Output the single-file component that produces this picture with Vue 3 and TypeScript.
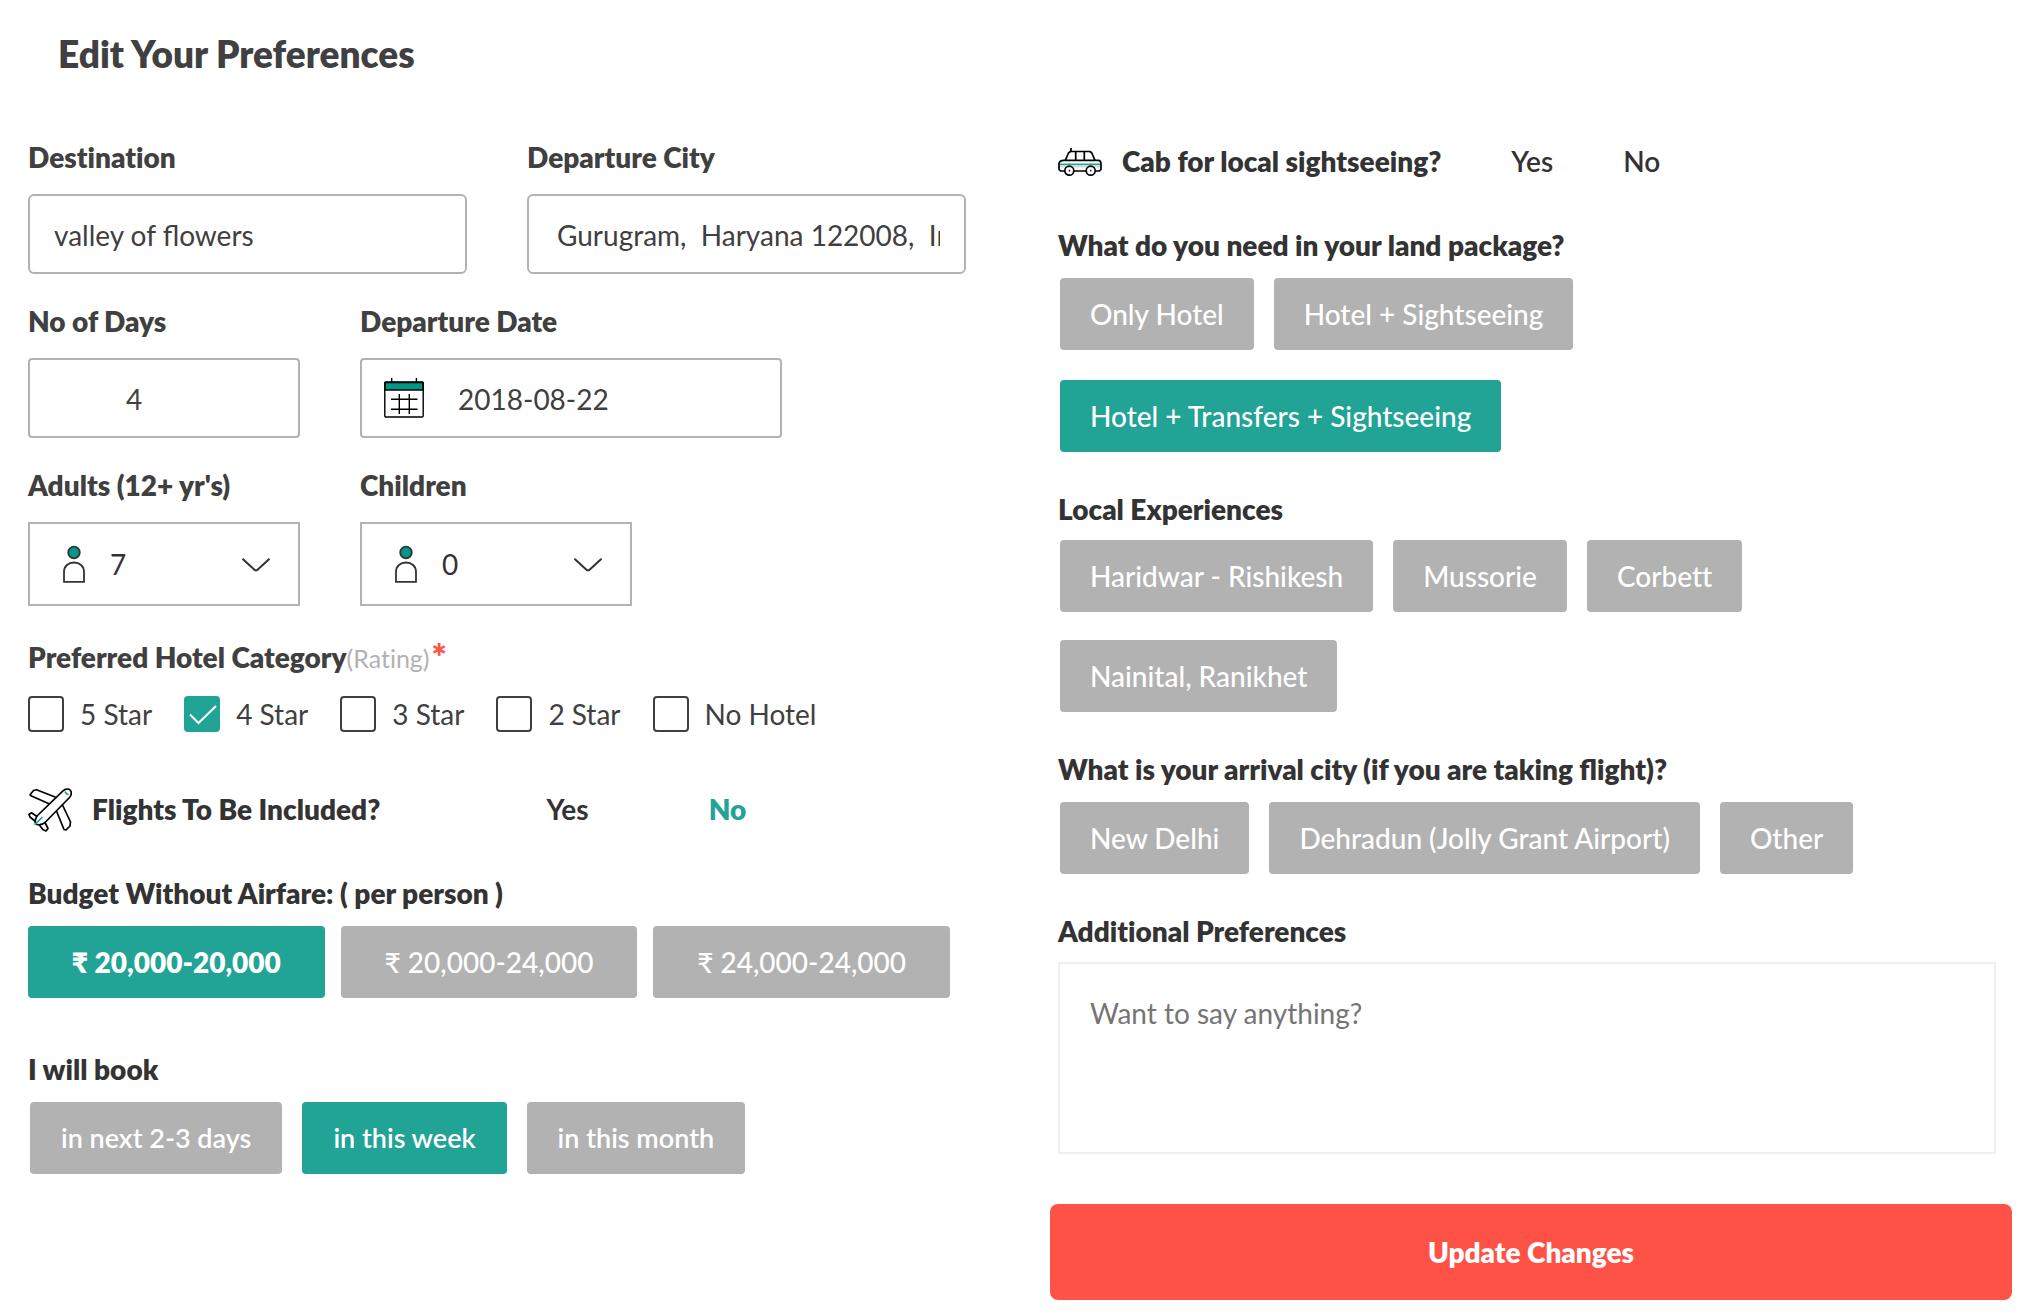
<script setup lang="ts">
import { ref } from 'vue'

const destination = ref('valley of flowers')
const departureCity = ref('Gurugram,  Haryana 122008,  India')
const days = ref('4')
const departureDate = ref('2018-08-22')
const adults = ref(7)
const children = ref(0)
const notes = ref('')

const ratings = ['5 Star', '4 Star', '3 Star', '2 Star', 'No Hotel']
const selectedRatings = ref<string[]>(['4 Star'])

const flights = ref('No')
const cab = ref('')

const budgets = ['₹ 20,000-20,000', '₹ 20,000-24,000', '₹ 24,000-24,000']
const budget = ref(budgets[0])

const bookingTimes = ['in next 2-3 days', 'in this week', 'in this month']
const bookingTime = ref('in this week')

const packages = ['Only Hotel', 'Hotel + Sightseeing', 'Hotel + Transfers + Sightseeing']
const landPackage = ref('Hotel + Transfers + Sightseeing')

const experiences = ['Haridwar - Rishikesh', 'Mussorie', 'Corbett', 'Nainital, Ranikhet']
const experience = ref('')

const cities = ['New Delhi', 'Dehradun (Jolly Grant Airport)', 'Other']
const arrivalCity = ref('')
</script>

<template>
  <main class="page">
    <h1 class="title">Edit Your Preferences</h1>
    <form class="columns" @submit.prevent>
      <div class="column">
        <div class="row halves">
          <div class="field">
            <label class="label" for="destination">Destination</label>
            <input id="destination" v-model="destination" class="box rounded" type="text" />
          </div>
          <div class="field">
            <label class="label" for="city">Departure City</label>
            <input id="city" v-model="departureCity" class="box rounded city" type="text" />
          </div>
        </div>

        <div class="row">
          <div class="field narrow">
            <label class="label" for="days">No of Days</label>
            <input id="days" v-model="days" class="box days" type="text" inputmode="numeric" />
          </div>
          <div class="field wide">
            <label class="label" for="date">Departure Date</label>
            <div class="control">
              <svg class="icon-calendar" viewBox="0 0 40 40" fill="none" stroke="#000" stroke-width="1.4" aria-hidden="true">
                <path d="M1 4.5h38v7.5H1z" fill="#009688" />
                <rect x="0.8" y="4" width="38.4" height="35" rx="1.2" />
                <path d="M7.7 0v4M32.4 0v4M15.3 16v20M25.3 16v20M7 21.3h26.5M7 31.3h26.5" />
              </svg>
              <input id="date" v-model="departureDate" class="box date" type="text" />
            </div>
          </div>
        </div>

        <div class="row">
          <div class="field narrow">
            <label class="label" for="adults">Adults (12+ yr's)</label>
            <div class="control">
              <svg class="icon-person" viewBox="0 0 22 38" fill="none" stroke="#333" stroke-width="1.8" aria-hidden="true">
                <circle cx="11" cy="7.500" r="5.800" fill="#009688" />
                <path d="M1 36.8V27C1 21 5.5 17.500 11 17.500s10 3.500 10 9.500v9.800z" />
              </svg>
              <select id="adults" v-model="adults" class="box select">
                <option v-for="n in 12" :key="n" :value="n">{{ n }}</option>
              </select>
              <svg class="icon-chevron" viewBox="0 0 28 14" fill="none" stroke="#333" stroke-width="2" aria-hidden="true">
                <path d="M0.500 0.800L13 12.200h2L27.500 0.800" />
              </svg>
            </div>
          </div>
          <div class="field narrow">
            <label class="label" for="children">Children</label>
            <div class="control">
              <svg class="icon-person" viewBox="0 0 22 38" fill="none" stroke="#333" stroke-width="1.8" aria-hidden="true">
                <circle cx="11" cy="7.500" r="5.800" fill="#009688" />
                <path d="M1 36.8V27C1 21 5.5 17.500 11 17.500s10 3.500 10 9.500v9.800z" />
              </svg>
              <select id="children" v-model="children" class="box select">
                <option v-for="n in 10" :key="n" :value="n - 1">{{ n - 1 }}</option>
              </select>
              <svg class="icon-chevron" viewBox="0 0 28 14" fill="none" stroke="#333" stroke-width="2" aria-hidden="true">
                <path d="M0.500 0.800L13 12.200h2L27.500 0.800" />
              </svg>
            </div>
          </div>
        </div>

        <section class="ratings" aria-labelledby="rating-label">
          <h2 id="rating-label" class="label">
            Preferred Hotel Category<span class="hint">(Rating)</span><span class="required">*</span>
          </h2>
          <div class="checks">
            <label v-for="r in ratings" :key="r" class="check">
              <span class="tick">
                <input v-model="selectedRatings" class="tick-input" type="checkbox" :value="r" />
                <svg v-if="selectedRatings.includes(r)" class="tick-mark" viewBox="0 0 36 36" fill="none" stroke="#fff" stroke-width="2" aria-hidden="true">
                  <path d="M6 18.500L14.500 27L32 10" />
                </svg>
              </span>
              {{ r }}
            </label>
          </div>
        </section>

        <div class="question flights">
          <svg class="icon-trip" viewBox="0 0 44 44" fill="none" stroke="#000" stroke-width="1.7" stroke-linejoin="round" aria-hidden="true">
            <path d="M27.700 9.200L8.500 1.700L5.500 2.500L2 6.800L3.500 8L21 15.800" />
            <path d="M34.500 17L42.500 34L42 38L38 42L36 41.500L28.500 23" />
            <path d="M35 2.800C37.500 0.600 40.500 0.600 42 1.800C43.800 3.500 43.800 7 41.500 9.500L17 34.500C14.500 36.500 9 37.500 8 36C6.500 34.500 7.500 29.500 9.500 27.500Z" />
            <path d="M9 28.500L3.500 24.800L0.900 26.500L2 29L7.500 33.500M11 36.500L14.800 41.500L18 43L20 40.500L17 34.500" />
            <path d="M6.700 36.800L14.500 29M37 3.500L38.500 5.800L40.500 6.600" stroke="#21a396" />
          </svg>
          <span class="label">Flights To Be Included?</span>
          <button
            v-for="a in ['Yes', 'No']"
            :key="a"
            type="button"
            class="answer strong"
            :class="{ chosen: flights === a }"
            :aria-pressed="flights === a"
            @click="flights = a"
          >{{ a }}</button>
        </div>

        <section class="group">
          <h2 class="label">Budget Without Airfare: ( per person )</h2>
          <div class="budgets">
            <button
              v-for="b in budgets"
              :key="b"
              type="button"
              class="chip centered"
              :class="{ active: budget === b, bold: budget === b }"
              @click="budget = b"
            >{{ b }}</button>
          </div>
        </section>

        <section class="group booking">
          <h2 class="label">I will book</h2>
          <div class="chips">
            <button
              v-for="t in bookingTimes"
              :key="t"
              type="button"
              class="chip compact"
              :class="{ active: bookingTime === t }"
              @click="bookingTime = t"
            >{{ t }}</button>
          </div>
        </section>
      </div>

      <div class="column">
        <div class="question">
          <svg class="icon-trip" viewBox="0 0 44 44" fill="none" stroke="#000" stroke-width="1.7" stroke-linejoin="round" aria-hidden="true">
            <path d="M1.500 24.300h41" stroke="#21a396" />
            <path d="M1.500 26.800h41" stroke="#999" stroke-width="0.6" />
            <path d="M6.700 31H2.500L1 29.500V24C1 21.500 3 20.300 6 20.300h34.500C42 20.300 43 22 43 24v5.500L41.500 31h-4M16 31h12" />
            <path d="M7.300 20.300L10.500 13L12.500 11.500h19.500l1.800 1.500L37 20.300M17.700 11.500v8.800M26.300 11.500v8.800M13 8v3.500" />
            <circle cx="11.300" cy="30.700" r="4.500" />
            <circle cx="32.700" cy="30.700" r="4.500" />
            <path d="M10.800 30.700h1.200M32.200 30.700h1.200" />
          </svg>
          <span class="label">Cab for local sightseeing?</span>
          <button
            v-for="a in ['Yes', 'No']"
            :key="a"
            type="button"
            class="answer"
            :class="{ chosen: cab === a }"
            :aria-pressed="cab === a"
            @click="cab = a"
          >{{ a }}</button>
        </div>

        <section class="group">
          <h2 class="label">What do you need in your land package?</h2>
          <div class="chips">
            <button
              v-for="p in packages"
              :key="p"
              type="button"
              class="chip"
              :class="{ active: landPackage === p }"
              @click="landPackage = p"
            >{{ p }}</button>
          </div>
        </section>

        <section class="group following tight">
          <h2 class="label">Local Experiences</h2>
          <div class="chips">
            <button
              v-for="e in experiences"
              :key="e"
              type="button"
              class="chip"
              :class="{ active: experience === e }"
              @click="experience = e"
            >{{ e }}</button>
          </div>
        </section>

        <section class="group following">
          <h2 class="label joined">What is your arrival city (if you are taking flight)?</h2>
          <div class="chips">
            <button
              v-for="c in cities"
              :key="c"
              type="button"
              class="chip"
              :class="{ active: arrivalCity === c }"
              @click="arrivalCity = c"
            >{{ c }}</button>
          </div>
        </section>

        <section class="group following tight">
          <label class="label" for="notes">Additional Preferences</label>
          <textarea id="notes" v-model="notes" class="notes" placeholder="Want to say anything?"></textarea>
        </section>

        <button type="submit" class="submit">Update Changes</button>
      </div>
    </form>
  </main>
</template>

<style>
body {
  margin: 0;
  background: #fff;
}
</style>

<style scoped>
*,
*::before,
*::after {
  box-sizing: border-box;
}

.page {
  padding: 32px 30px 16px 28px;
  font-family: Lato, 'Noto Sans', sans-serif;
  font-size: 28px;
  line-height: 34px;
  color: #404040;
}

.title {
  margin: 0 0 64px 30px;
  font-size: 37px;
  line-height: 44px;
  font-weight: 800;
}

button,
input,
select,
textarea {
  font: inherit;
  color: inherit;
  margin: 0;
}

button {
  cursor: pointer;
  border: 0;
}

.columns {
  display: grid;
  grid-template-columns: minmax(0, 1fr) minmax(0, 1fr);
  gap: 92px;
}

.label {
  display: block;
  margin: 0;
  font-size: 28px;
  line-height: 34px;
  font-weight: 800;
  font-variant-ligatures: none;
  white-space: nowrap;
}

.joined {
  font-variant-ligatures: normal;
}

.row {
  display: flex;
  gap: 60px;
  margin-bottom: 30px;
}

.field {
  display: flex;
  flex-direction: column;
  gap: 20px;
}

.halves .field {
  flex: 1;
  min-width: 0;
}

.narrow {
  width: 29%;
}

.wide {
  width: 45%;
}

.box {
  width: 100%;
  height: 80px;
  padding: 2px 24px 0;
  border: 2px solid #b2b2b2;
  border-radius: 4px;
  background: #fff;
}

.rounded {
  border-radius: 6px;
}

.city {
  padding-left: 28px;
}

.days,
.date {
  padding-left: 96px;
}

.control {
  position: relative;
}

.icon-calendar {
  position: absolute;
  left: 24px;
  top: 20px;
  width: 40px;
  height: 40px;
}

.select {
  appearance: none;
  display: block;
  height: 84px;
  padding: 0 60px 0 80px;
  border-radius: 0;
  color: #333;
}

.icon-person {
  position: absolute;
  left: 35px;
  top: 23px;
  width: 22px;
  height: 38px;
  pointer-events: none;
}

.icon-chevron {
  position: absolute;
  right: 30px;
  top: 36px;
  width: 28px;
  height: 14px;
  pointer-events: none;
}

.ratings {
  display: flex;
  flex-direction: column;
  gap: 22px;
  margin-top: 34px;
}

.hint {
  font-size: 25px;
  font-weight: 400;
  line-height: 1px;
  color: #b2b2b2;
}

.required {
  margin-left: 2px;
  font-size: 36px;
  line-height: 1px;
  vertical-align: -2px;
  color: #ff5246;
}

.checks {
  display: flex;
  gap: 32px;
}

.check {
  display: flex;
  align-items: center;
  gap: 16px;
  white-space: nowrap;
}

.tick {
  position: relative;
  width: 36px;
  height: 36px;
}

.tick-input {
  appearance: none;
  display: block;
  width: 36px;
  height: 36px;
  border: 2px solid #404040;
  border-radius: 4px;
}

.tick-input:checked {
  border-color: #21a396;
  background: #21a396;
}

.tick-mark {
  position: absolute;
  inset: 0;
  pointer-events: none;
}

.question {
  display: flex;
  align-items: center;
  height: 44px;
  margin-bottom: 44px;
  color: #333;
}

.question .label,
.answer {
  padding-bottom: 2px;
}

.flights {
  margin-top: 56px;
}

.icon-trip {
  flex: none;
  width: 44px;
  height: 44px;
  margin-right: 20px;
}

.answer {
  margin-left: 70px;
  padding-top: 0;
  padding-left: 0;
  padding-right: 0;
  background: none;
  font-weight: 600;
}

.strong {
  margin-left: 120px;
  font-weight: 700;
}

.label + .strong {
  margin-left: 166px;
}

.chosen {
  color: #21a396;
  font-weight: 800;
}

.group {
  display: flex;
  flex-direction: column;
  gap: 16px;
  color: #333;
}

.following {
  margin-top: 40px;
}

.tight {
  gap: 14px;
}

.booking {
  margin-top: 54px;
}

.budgets {
  display: grid;
  grid-template-columns: repeat(3, 1fr);
  gap: 16px;
  padding-right: 16px;
}

.chips {
  display: flex;
  flex-wrap: wrap;
  gap: 30px 20px;
  padding-left: 2px;
}

.tight .chips {
  row-gap: 28px;
}

.chip {
  height: 72px;
  padding: 0 30px;
  border-radius: 4px;
  background: #b2b2b2;
  color: #fff;
  font-weight: 500;
  font-variant-ligatures: none;
  white-space: nowrap;
}

.compact {
  padding: 0 31px;
  font-size: 27px;
  font-weight: 600;
}

.centered {
  padding: 0;
}

.active {
  background: #21a396;
}

.bold {
  font-weight: 800;
}

.notes {
  display: block;
  width: 100%;
  height: 192px;
  padding: 32px 30px;
  border: 2px solid #f0f0f0;
  background: #fff;
  resize: none;
}

.notes::placeholder {
  color: #757575;
}

.submit {
  display: block;
  width: calc(100% + 24px);
  height: 96px;
  margin: 50px 0 0 -8px;
  border-radius: 8px;
  background: #ff5246;
  color: #fff;
  font-weight: 800;
}
</style>
